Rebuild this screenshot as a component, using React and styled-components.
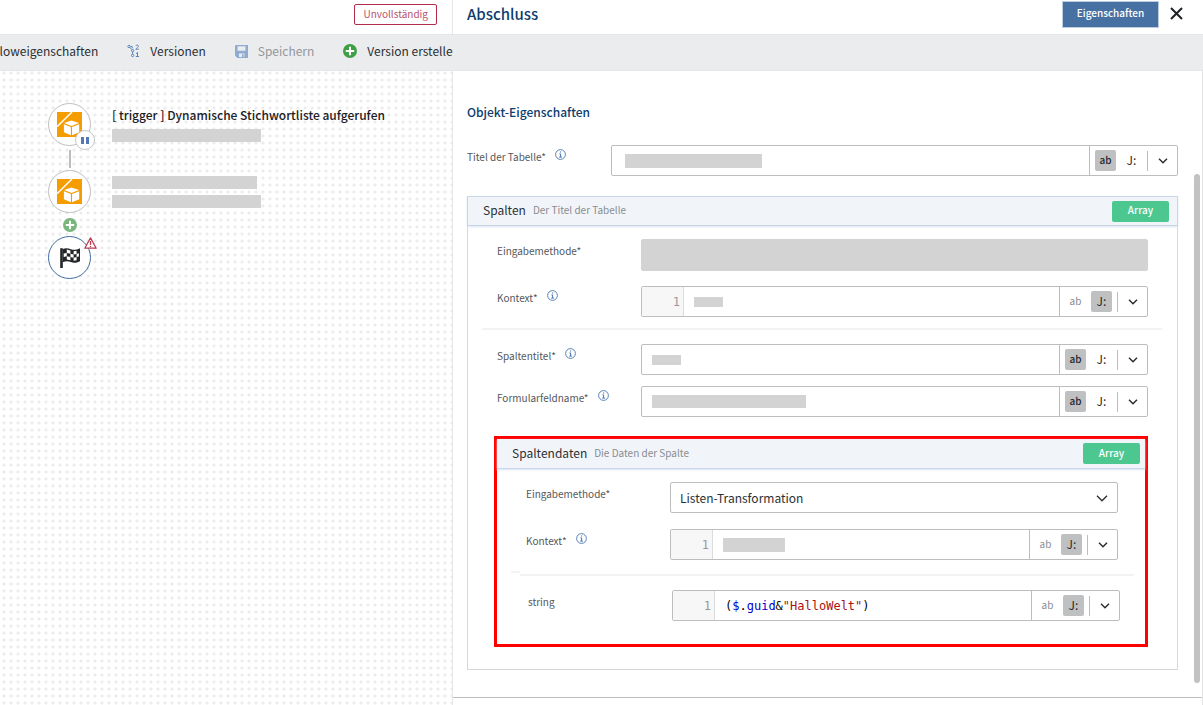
import React, { useId } from "react";
import styled, { createGlobalStyle } from "styled-components";

const Global = createGlobalStyle`
  *, *::before, *::after { box-sizing: border-box; }
  body {
    margin: 0;
    background: #fff;
    color: #2c2f33;
    font-family: "Noto Sans CJK SC", "Noto Sans", sans-serif;
    font-size: 12px;
    line-height: 16px;
  }
  button, input, select { font: inherit; color: inherit; margin: 0; }
  button { cursor: pointer; }
  h1, h2, h3, p, ol { margin: 0; padding: 0; font: inherit; }
`;

const Shell = styled.div`
  display: grid;
  grid-template-columns: 453px minmax(0, 1fr);
  min-height: 100vh;
`;

/* ---------- Flow side ---------- */

const FlowPane = styled.section`
  display: flex;
  flex-direction: column;
  min-width: 0;
  overflow: hidden;
`;

const FlowHeader = styled.header`
  display: flex;
  justify-content: flex-end;
  align-items: flex-start;
  height: 34px;
  padding: 4px 15px 0;
  border-right: 1px solid #e4e6e9;
`;

const StatusTag = styled.span`
  padding: 0 8px 2px;
  border: 1px solid #b32c4c;
  border-radius: 2px;
  color: #b9546c;
  font-size: 10px;
  line-height: 17px;
`;

const Toolbar = styled.nav`
  display: flex;
  align-items: center;
  gap: 29px;
  height: 37px;
  padding-bottom: 3px;
  background: #ebecee;
  border-top: 1px solid #e4e6e8;
  border-bottom: 1px solid #e4e6e8;
  white-space: nowrap;
`;

const ToolButton = styled.button`
  display: flex;
  flex: none;
  align-items: center;
  gap: 10px;
  padding: 0;
  border: 0;
  background: none;
  color: ${(p) => (p.disabled ? "#94979b" : "#2c2f33")};
  &:first-child { margin-left: -7px; }
  svg { display: block; }
`;

const Canvas = styled.div`
  flex: 1;
  padding: 32px 20px 32px 48px;
  border-right: 1px solid #e4e6e9;
  background-image: radial-gradient(circle at 4px 2px, #ececec 1px, transparent 2px);
  background-size: 7px 7px;
`;

const StepList = styled.ol`
  list-style: none;
`;

const Step = styled.li`
  display: flex;
  gap: 21px;
`;

const StepNode = styled.div`
  position: relative;
  display: flex;
  flex: none;
  align-items: center;
  justify-content: center;
  width: 43px;
  height: 43px;
  border: 1px solid ${(p) => (p.$selected ? "#3f6ba3" : "#bfbfbf")};
  border-radius: 50%;
  background: #fff;
  svg { display: block; }
`;

const StepBadge = styled.span`
  position: absolute;
  right: -5px;
  bottom: -5px;
  display: flex;
  align-items: center;
  justify-content: center;
  gap: 2px;
  width: 20px;
  height: 20px;
  border: 1px solid #c6c6c6;
  border-radius: 50%;
  background: #fff;
`;

const PauseBar = styled.i`
  width: 3px;
  height: 7px;
  background: #5478b4;
`;

const StepAlert = styled.span`
  position: absolute;
  top: 0;
  right: -7px;
`;

const StepText = styled.div`
  display: flex;
  flex-direction: column;
  gap: 6px;
  padding-top: ${(p) => (p.$titled ? 4 : 6)}px;
`;

const StepTitle = styled.h3`
  color: #1d2024;
  font-weight: 500;
  white-space: nowrap;
`;

const Connector = styled.li`
  display: flex;
  justify-content: center;
  width: 43px;
  padding: ${(p) => (p.$insert ? "5px 0 4px" : "4px 0 2px")};
`;

const Line = styled.span`
  width: 2px;
  height: 18px;
  background: #bdbdbd;
`;

const InsertButton = styled.button`
  display: block;
  padding: 0;
  border: 0;
  background: none;
  line-height: 0;
`;

const Mask = styled.span`
  display: block;
  flex: none;
  width: ${(p) => p.$w}px;
  height: ${(p) => p.$h || 13}px;
  background: #d3d3d3;
`;

/* ---------- Properties side ---------- */

const Panel = styled.section`
  display: flex;
  flex-direction: column;
  min-width: 0;
  background: #fff;
`;

const PanelHeader = styled.header`
  display: flex;
  align-items: center;
  gap: 11px;
  height: 34px;
  padding: 0 20px 6px 14px;
`;

const PanelTitle = styled.h1`
  flex: 1;
  color: #0d3c6e;
  font-size: 15px;
  font-weight: 500;
`;

const TabButton = styled.button`
  width: 97px;
  height: 27px;
  padding: 0 0 2px;
  border: 1px solid #bccde0;
  background: #4771a3;
  color: #fff;
  font-size: 10px;
  font-weight: 500;
`;

const CloseButton = styled.button`
  padding: 0 0 2px;
  border: 0;
  background: none;
  line-height: 0;
`;

const PanelBar = styled.div`
  height: 37px;
  background: #ebecee;
  border-top: 1px solid #e4e6e8;
  border-bottom: 1px solid #e4e6e8;
`;

const PanelBody = styled.div`
  position: relative;
  flex: 1;
  padding: 33px 24px 0 14px;
  border-right: 1px solid #e3e3e3;
`;

const ScrollThumb = styled.div`
  position: absolute;
  top: 103px;
  right: 2px;
  bottom: 22px;
  width: 6px;
  border-radius: 3px;
  background: #c1c2c3;
`;

const PanelFooter = styled.footer`
  height: 8px;
  margin-top: 27px;
  margin-left: -14px;
  margin-right: -24px;
  border-top: 1px solid #bdbdbd;
`;

const SectionTitle = styled.h2`
  margin-bottom: 25px;
  color: #0d3c6e;
  font-weight: 500;
`;

const Row = styled.div`
  display: grid;
  grid-template-columns: 144px minmax(0, 1fr);
  align-items: start;
  margin-top: ${(p) => p.$mt || 0}px;
`;

const LabelCell = styled.div`
  display: flex;
  align-items: flex-start;
  gap: 9px;
  color: #54575b;
  font-size: 10px;
  line-height: 23px;
  svg { margin-top: 4px; }
`;

const Field = styled.div`
  display: flex;
  height: 31px;
  border: 1px solid #bdbdbd;
  border-radius: 2px;
  background: #fff;
`;

const Entry = styled.div`
  display: flex;
  flex: 1;
  align-items: center;
  min-width: 0;
  padding-left: ${(p) => (p.$wide ? 13 : 10)}px;
`;

const TextInput = styled.input`
  flex: 1;
  min-width: 0;
  border: 0;
  outline: 0;
  background: transparent;
`;

const Gutter = styled.span`
  width: 42px;
  padding-right: 3px;
  border-right: 1px solid #dcdcdc;
  background: #f7f7f7;
  color: #999;
  font: 12px/31px "DejaVu Sans Mono", monospace;
  text-align: right;
`;

const CodeLine = styled.code`
  flex: 1;
  outline: 0;
  color: #000;
  font: 12px/16px "DejaVu Sans Mono", monospace;
  white-space: pre;
`;

const Token = styled.span`
  color: ${(p) => (p.$kind === "string" ? "#a11" : "#00c")};
`;

const Modes = styled.div`
  display: flex;
  flex: none;
  align-items: center;
  gap: 5px;
  padding-left: 5px;
  border-left: 1px solid #bdbdbd;
`;

const ModeButton = styled.button`
  display: flex;
  align-items: center;
  justify-content: center;
  width: 21px;
  height: 21px;
  padding: 0 0 2px;
  border: 0;
  border-radius: 2px;
  background: ${(p) => (p.$on ? "#bfc0c1" : "transparent")};
  color: ${(p) => (p.$on || p.$dark ? "#26282b" : "#8b8d90")};
  font-size: ${(p) => (p.$dark ? 12 : 10)}px;
  font-weight: ${(p) => (p.$on && !p.$dark ? 500 : 400)};
`;

const MenuButton = styled.button`
  display: flex;
  align-items: center;
  justify-content: center;
  width: 30px;
  height: 20px;
  padding: 0;
  border: 0;
  border-left: 1px solid #bdbdbd;
  background: none;
`;

const SelectWrap = styled.div`
  position: relative;
  > svg {
    position: absolute;
    top: 12px;
    right: 10px;
    pointer-events: none;
  }
`;

const Select = styled.select`
  display: block;
  width: 100%;
  height: 31px;
  padding: 0 30px 0 9px;
  border: 1px solid #bdbdbd;
  border-radius: 2px;
  background: #fff;
  appearance: none;
`;

const MaskedSelect = styled(Select)`
  height: 32px;
  border-color: #d3d3d3;
  background: #d3d3d3;
`;

const Card = styled.section`
  margin-top: 20px;
  border: 1px solid #d6d8db;
`;

const Highlight = styled.section`
  margin-top: 19px;
  margin-left: -3px;
  border: 3px solid #f00;
`;

const CardHeader = styled.header`
  display: flex;
  align-items: center;
  gap: 7px;
  height: 30px;
  padding: 0 5px 0 15px;
  background: #f1f5fa;
  border-bottom: 1px solid #c8d6ea;
  box-shadow: 0 1px 2px #d9e4f2;
`;

const OuterHeader = styled(CardHeader)`
  margin: -1px -1px 0;
  padding-right: 8px;
  border: 1px solid #c8d6ea;
`;

const CardTitle = styled.h3`
  padding-bottom: 2px;
`;

const CardHint = styled.p`
  flex: 1;
  padding-bottom: 2px;
  color: #8a8c90;
  font-size: 10px;
`;

const TypeButton = styled.button`
  width: 57px;
  height: 21px;
  padding: 0 0 2px;
  border: 0;
  border-radius: 2px;
  background: #4bc78f;
  color: #fff;
  font-size: 10px;
  font-weight: 500;
`;

const CardBody = styled.div`
  padding: ${(p) => (p.$inner ? "13px 27px 23px 29px" : "13px 29px 22px")};
`;

const Divider = styled.hr`
  height: 2px;
  margin: 11px -14px 0 -15px;
  border: 0;
  background: #f3f3f3;
`;

const ItemGroup = styled.div`
  margin: -2px -16px 0 -6px;
  padding: 3px 14px 0 8px;
  background: #fff;
`;

const ItemDivider = styled(Divider)`
  margin: 0 -14px 0 -8px;
`;

/* ---------- Icons ---------- */

const InfoIcon = () => (
  <svg width="11" height="11" viewBox="0 0 11 11" fill="none" stroke="#4a76ae" role="img" aria-label="Info">
    <circle cx="5.5" cy="5.5" r="4.9" strokeWidth="0.9" />
    <path d="M4.4 4.9h1.2v3.2M4.2 8.1h2.7" />
    <path d="M5 2.4h1.2v1.1H5z" fill="#4a76ae" stroke="none" />
  </svg>
);

const Chevron = ({ w = 10, sw = 1.5 }) => (
  <svg width={w} height="8" viewBox={`0 0 ${w} 8`} fill="none" stroke="#2b2d30" strokeWidth={sw}>
    <path d={`M1 1.8l${w / 2 - 1} ${w / 2 - 1} ${w / 2 - 1} -${w / 2 - 1}`} />
  </svg>
);

const VersionsIcon = () => (
  <svg width="13" height="14" viewBox="0 0 13 14" fill="none" stroke="#5c86b8">
    <circle cx="2" cy="2.5" r="1.2" />
    <circle cx="5.6" cy="6.6" r="1.2" />
    <circle cx="5.6" cy="11.4" r="1.2" />
    <path d="M2.9 3.4l1.9 2.2M5.6 7.8v2.4M3.4 2.5h1.8v1.6" />
    <path d="M8.8 1.9c.4-1.2 2.6-1.1 2.6.3 0 1-1.6 1.7-2.6 3h3M9 9.6l1.5-1.1v4M8.8 12.5h3.2" />
  </svg>
);

const SaveIcon = () => (
  <svg width="13" height="13" viewBox="0 0 13 13">
    <path d="M0 1.2Q0 0 1.2 0H13v13H2.4L0 10.8z" fill="#8fabd0" />
    <path d="M2.5 1.2h8v4.6h-8zM4 8.6h5.4V12H4z" fill="#ebecee" />
    <path d="M7 9.2h1.6V12H7z" fill="#8fabd0" />
  </svg>
);

const PlusIcon = ({ color }) => (
  <svg width="14" height="14" viewBox="0 0 14 14">
    <circle cx="7" cy="7" r="7" fill={color} />
    <path d="M7 2.8v8.4M2.8 7h8.4" stroke="#fff" strokeWidth="2" />
  </svg>
);

const BoxIcon = () => (
  <svg width="25" height="25" viewBox="0 0 25 25">
    <path d="M0 0h25v25H0z" fill="#f59c00" />
    <path d="M0 14.8L15 0" stroke="#fff" strokeWidth="1.5" />
    <path d="M14.5 8.6l7.6 2.5-7.6 2.9-7.4-2.9z" fill="#fff" />
    <path d="M6.9 12.2l7 2.7v8.3l-7-2.9zM22.2 12.2l-7.2 2.7v8.3l7.2-2.9z" fill="#fff" />
  </svg>
);

const FlagIcon = () => (
  <svg width="22" height="22" viewBox="0 0 22 22">
    <path d="M1.2 1.2h2.6V21H1.2z" fill="#232629" />
    <path d="M3.8 2c3-1.4 5.4-.9 8 .2 2.7 1.1 5.2.9 9.2-1v13.1c-4 1.9-6.5 1.9-9.2.8-2.6-1.1-5-1.2-8 .2z" fill="#232629" />
    <g fill="#fff">
      <path d="M7.8 2.6l3.6.8v3.3l-3.6-.8zM14.6 4.3l3-.6V7l-3 .5z" />
      <path d="M4.7 6.5l3.1-.6v3.3l-3.1.7zM11.4 6.7l3.2.8v3.2l-3.2-.7zM17.6 7l2.3-.7v3.1l-2.3.7z" />
      <path d="M7.8 9.2l3.6.8v3.2l-3.6-.8zM14.6 10.7l3-.6v3.2l-3 .5z" />
    </g>
  </svg>
);

const AlertIcon = () => (
  <svg width="13" height="12" viewBox="0 0 13 12" fill="none" stroke="#b93a52" strokeLinejoin="round">
    <path d="M6.5.9l5.7 10.3H.8z" fill="#fff" strokeWidth="1.2" />
    <path d="M6.5 4v4M6.5 9v1.2" strokeWidth="1.3" />
  </svg>
);

const CloseIcon = () => (
  <svg width="13" height="13" viewBox="0 0 13 13" stroke="#1f2124" strokeWidth="2">
    <path d="M1 1l11 11M12 1L1 12" />
  </svg>
);

/* ---------- Composite parts ---------- */

function ModeSwitch({ mode }) {
  return (
    <Modes>
      <ModeButton type="button" $on={mode === "text"} aria-pressed={mode === "text"}>ab</ModeButton>
      <ModeButton type="button" $dark $on={mode === "json"} aria-pressed={mode === "json"}>J:</ModeButton>
      <MenuButton type="button" aria-label="Optionen"><Chevron /></MenuButton>
    </Modes>
  );
}

function FieldRow({ label, info, mt, mode, wide, mask, maskHeight, children }) {
  const id = useId();
  return (
    <Row $mt={mt}>
      <LabelCell>
        <label id={`${id}-label`} htmlFor={id}>{label}</label>
        {info && <InfoIcon />}
      </LabelCell>
      <Field>
        {mode === "json" && <Gutter>1</Gutter>}
        <Entry $wide={wide}>
          {mask && <Mask $w={mask} $h={maskHeight} />}
          {children ? (
            <CodeLine id={id} role="textbox" aria-labelledby={`${id}-label`} contentEditable suppressContentEditableWarning>
              {children}
            </CodeLine>
          ) : (
            <TextInput id={id} type="text" />
          )}
        </Entry>
        <ModeSwitch mode={mode} />
      </Field>
    </Row>
  );
}

function SelectRow({ label, option }) {
  const id = useId();
  return (
    <Row>
      <LabelCell><label htmlFor={id}>{label}</label></LabelCell>
      {option ? (
        <SelectWrap>
          <Select id={id} defaultValue={option}><option>{option}</option></Select>
          <Chevron w={12} sw={1.3} />
        </SelectWrap>
      ) : (
        <MaskedSelect id={id} />
      )}
    </Row>
  );
}

function SpaltendatenCard() {
  return (
    <Highlight>
      <CardHeader>
        <CardTitle>Spaltendaten</CardTitle>
        <CardHint>Die Daten der Spalte</CardHint>
        <TypeButton type="button">Array</TypeButton>
      </CardHeader>
      <CardBody $inner>
        <SelectRow label="Eingabemethode*" option="Listen-Transformation" />
        <FieldRow label="Kontext*" info mt={16} mode="json" mask={62} maskHeight={14} />
        <Divider />
        <ItemGroup>
          <ItemDivider />
          <FieldRow label="string" mt={14} mode="json">
            (<Token>$</Token>.<Token>guid</Token>&amp;<Token $kind="string">"HalloWelt"</Token>)
          </FieldRow>
        </ItemGroup>
      </CardBody>
    </Highlight>
  );
}

function SpaltenCard() {
  return (
    <Card>
      <OuterHeader>
        <CardTitle>Spalten</CardTitle>
        <CardHint>Der Titel der Tabelle</CardHint>
        <TypeButton type="button">Array</TypeButton>
      </OuterHeader>
      <CardBody>
        <SelectRow label="Eingabemethode*" />
        <FieldRow label="Kontext*" info mt={15} mode="json" mask={29} maskHeight={10} />
        <Divider />
        <FieldRow label="Spaltentitel*" info mt={14} mode="text" mask={29} maskHeight={10} />
        <FieldRow label="Formularfeldname*" info mt={11} mode="text" mask={154} />
        <SpaltendatenCard />
      </CardBody>
    </Card>
  );
}

export default function App() {
  return (
    <>
      <Global />
      <Shell>
        <FlowPane>
          <FlowHeader><StatusTag>Unvollständig</StatusTag></FlowHeader>
          <Toolbar>
            <ToolButton type="button">Floweigenschaften</ToolButton>
            <ToolButton type="button"><VersionsIcon />Versionen</ToolButton>
            <ToolButton type="button" disabled><SaveIcon />Speichern</ToolButton>
            <ToolButton type="button"><PlusIcon color="#3f9f45" />Version erstellen</ToolButton>
          </Toolbar>
          <Canvas>
            <StepList>
              <Step>
                <StepNode>
                  <BoxIcon />
                  <StepBadge><PauseBar /><PauseBar /></StepBadge>
                </StepNode>
                <StepText $titled>
                  <StepTitle>[ trigger ] Dynamische Stichwortliste aufgerufen</StepTitle>
                  <Mask $w={149} />
                </StepText>
              </Step>
              <Connector><Line /></Connector>
              <Step>
                <StepNode><BoxIcon /></StepNode>
                <StepText>
                  <Mask $w={145} />
                  <Mask $w={149} />
                </StepText>
              </Step>
              <Connector $insert>
                <InsertButton type="button" aria-label="Schritt einfügen"><PlusIcon color="#78b77b" /></InsertButton>
              </Connector>
              <Step>
                <StepNode $selected>
                  <FlagIcon />
                  <StepAlert><AlertIcon /></StepAlert>
                </StepNode>
              </Step>
            </StepList>
          </Canvas>
        </FlowPane>

        <Panel>
          <PanelHeader>
            <PanelTitle>Abschluss</PanelTitle>
            <TabButton type="button">Eigenschaften</TabButton>
            <CloseButton type="button" aria-label="Schließen"><CloseIcon /></CloseButton>
          </PanelHeader>
          <PanelBar />
          <PanelBody>
            <SectionTitle>Objekt-Eigenschaften</SectionTitle>
            <FieldRow label="Titel der Tabelle*" info mode="text" wide mask={137} maskHeight={14} />
            <SpaltenCard />
            <PanelFooter />
            <ScrollThumb />
          </PanelBody>
        </Panel>
      </Shell>
    </>
  );
}
